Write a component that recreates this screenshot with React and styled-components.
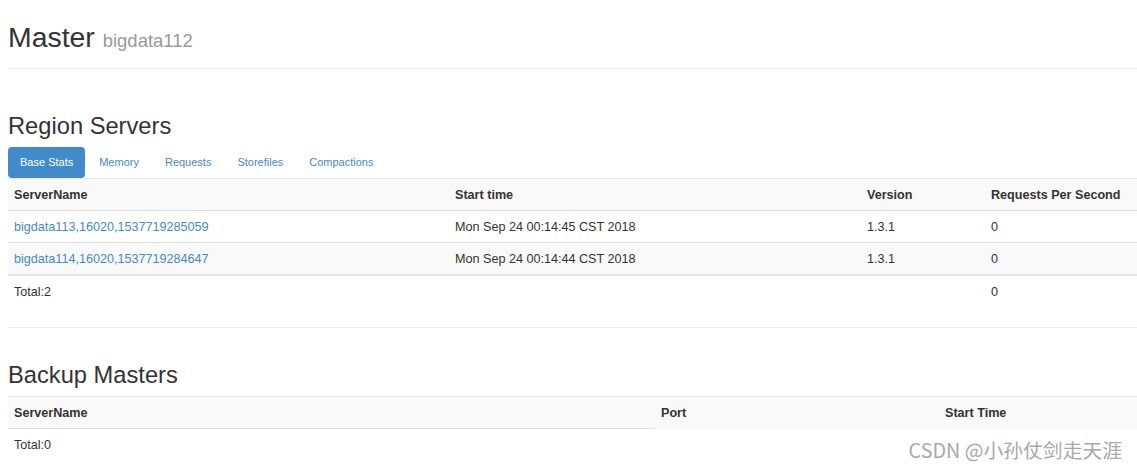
import React from 'react';
import styled, { createGlobalStyle } from 'styled-components';

const GlobalStyle = createGlobalStyle`
    body{
        margin:0;
        background:#fff;
        color:#333;
        font-family:"Liberation Sans", Arial, Helvetica, sans-serif;
        font-size:12.6px;
        line-height:18px;
    }
`
const Page = styled.div`
    position:relative;
    height:469px;
    padding-left:8px;
    overflow:hidden;
`
const PageHeader = styled.div`
    padding:22px 0 15px;
    border-bottom:1px solid #eee;
`
const Title = styled.h1`
    margin:0;
    font-size:28.4px;
    line-height:31px;
    font-weight:normal;
    color:#333;
    >small{
        font-size:18.5px;
        line-height:0;
        color:#999;
    }
`
const Section = styled.section`
    border-bottom:${p => p.$line ? '1px solid #eee' : 'none'};
    padding-bottom:${p => p.$pad || 0}px;
`
const Heading = styled.h2`
    margin:${p => p.$top}px 0 8px;
    font-size:23.7px;
    line-height:26px;
    font-weight:normal;
    color:#333;
`
const Pills = styled.ul`
    display:flex;
    list-style:none;
    margin:0;
    padding:0;
    gap:2px;
`
const Pill = styled.li`
    height:31px;
    line-height:31px;
    padding:0 12px;
    font-size:11px;
    border-radius:4px;
    color:${p => p.$active ? '#fff' : '#428bca'};
    background:${p => p.$active ? '#428bca' : 'transparent'};
    cursor:pointer;
`
const Table = styled.table`
    width:100%;
    border-collapse:collapse;
    table-layout:fixed;
    th, td{
        text-align:left;
        padding:6.5px 6px;
        white-space:nowrap;
    }
    thead th{
        background:#f9f9f9;
        font-weight:bold;
        border-top:1px solid #e6e6e6;
    }
`
const Row = styled.tr`
    background:${p => p.$striped ? '#f9f9f9' : '#fff'};
    >td{
        border-top:${p => p.$thick ? '2px solid #e4e4e4' : '1px solid #ddd'};
    }
`
const Link = styled.a`
    color:#428bca;
    text-decoration:none;
`
const Watermark = styled.div`
    position:absolute;
    right:15px;
    bottom:7px;
    font-family:"Noto Sans CJK SC", "Liberation Sans", sans-serif;
    font-size:19.8px;
    line-height:24px;
    color:#a8a8a8;
    text-shadow:0 0 1px #fff;
`

const tabs = ['Base Stats', 'Memory', 'Requests', 'Storefiles', 'Compactions'];
const servers = [
    { name: 'bigdata113,16020,1537719285059', start: 'Mon Sep 24 00:14:45 CST 2018', version: '1.3.1', rps: 0 },
    { name: 'bigdata114,16020,1537719284647', start: 'Mon Sep 24 00:14:44 CST 2018', version: '1.3.1', rps: 0 },
];

export default function App(){
    return(
        <Page>
            <GlobalStyle/>
            <PageHeader>
                <Title>Master <small>bigdata112</small></Title>
            </PageHeader>
            <Section $line $pad={20}>
                <Heading $top={44}>Region Servers</Heading>
                <Pills>
                    {tabs.map((t, i) => <Pill key={t} $active={i === 0}>{t}</Pill>)}
                </Pills>
                <Table>
                    <colgroup>
                        <col style={{ width: 441 }}/>
                        <col style={{ width: 412 }}/>
                        <col style={{ width: 124 }}/>
                        <col/>
                    </colgroup>
                    <thead>
                        <tr>
                            <th>ServerName</th>
                            <th>Start time</th>
                            <th>Version</th>
                            <th>Requests Per Second</th>
                        </tr>
                    </thead>
                    <tbody>
                        {servers.map((s, i) => (
                            <Row key={s.name} $striped={i % 2 === 1}>
                                <td><Link href="#">{s.name}</Link></td>
                                <td>{s.start}</td>
                                <td>{s.version}</td>
                                <td>{s.rps}</td>
                            </Row>
                        ))}
                        <Row $thick>
                            <td>Total:2</td>
                            <td></td>
                            <td></td>
                            <td>0</td>
                        </Row>
                    </tbody>
                </Table>
            </Section>
            <Section>
                <Heading $top={34}>Backup Masters</Heading>
                <Table>
                    <colgroup>
                        <col style={{ width: 647 }}/>
                        <col style={{ width: 284 }}/>
                        <col/>
                    </colgroup>
                    <thead>
                        <tr>
                            <th>ServerName</th>
                            <th>Port</th>
                            <th>Start Time</th>
                        </tr>
                    </thead>
                    <tbody>
                        <Row>
                            <td>Total:0</td>
                        </Row>
                    </tbody>
                </Table>
            </Section>
            <Watermark>CSDN @小孙仗剑走天涯</Watermark>
        </Page>
    )
}
